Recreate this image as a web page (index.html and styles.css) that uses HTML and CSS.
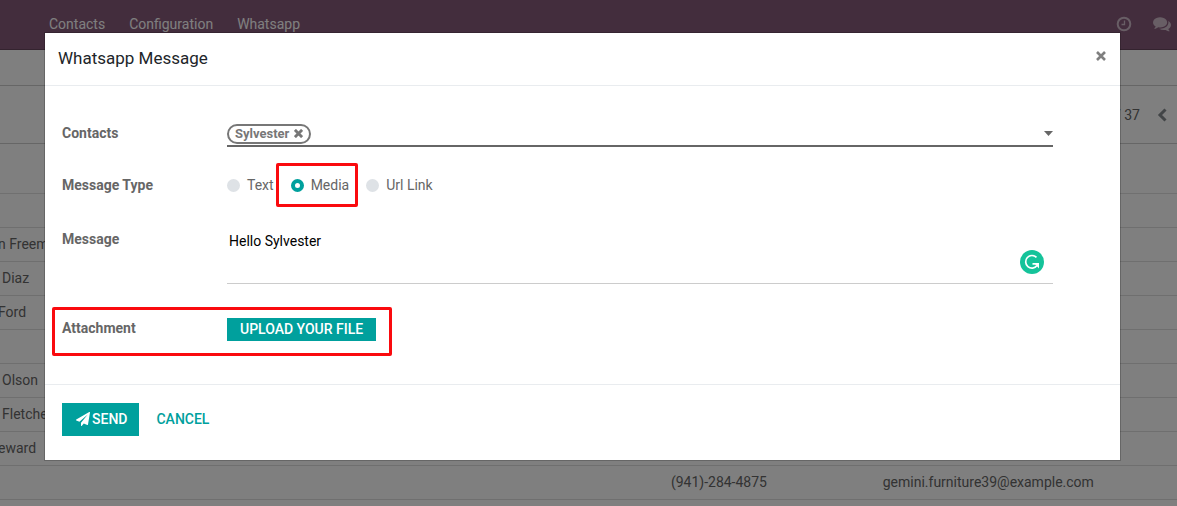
FILE: index.html
```html
<!DOCTYPE html>
<html lang="en">
<head>
<meta charset="utf-8">
<title>Whatsapp Message</title>
<link rel="stylesheet" href="styles.css">
</head>
<body>
<div class="app">
  <header class="navbar">
    <nav class="menu">
      <a href="#">Contacts</a>
      <a href="#">Configuration</a>
      <a href="#">Whatsapp</a>
    </nav>
    <div class="systray">
      <button type="button" aria-label="Activities">
        <svg width="16" height="16" viewBox="0 0 16 16" fill="none" stroke="currentColor"><circle cx="8" cy="8" r="6.3" stroke-width="2"/><path d="M8.5 4.5v4H5.5" stroke-width="1.3"/></svg>
      </button>
      <button type="button" aria-label="Messages">
        <svg width="18" height="16" viewBox="0 0 1792 1600" fill="currentColor"><path d="M1408 640q0 139-94 257t-256.500 186.500T704 1152q-86 0-176-16-124 88-278 128-36 9-86 16h-3q-11 0-20.500-8t-11.500-21q-1-3-1-6.500t.5-6.500 2-6l2.500-5 3.500-5.500 4-5 4.500-5 4-4.500q5-6 23-25t26-29.500 22.500-29 25-38.500 20.500-44Q142 974 71 865T0 640q0-139 94-257t256.500-186.500T704 128t353.500 68.500T1314 383t94 257zm384 256q0 120-71 224.500T1526 1297q10 24 20.500 44t25 38.500 22.500 29 26 29.500 23 25q1 1 4 4.500t4.500 5 4 5 3.500 5.500l2.500 5 2 6 .5 6.500-1 6.500q-3 14-13 22t-22 7q-50-7-86-16-154-40-278-128-90 16-176 16-271 0-472-132 58 4 88 4 161 0 309-45t264-129q125-92 192-212t67-254q0-77-23-152 129 71 204 178t75 230z"/></svg>
      </button>
    </div>
  </header>
  <div class="breadcrumb-bar"></div>
  <div class="pager">
    <span>/ 37</span>
    <button type="button" aria-label="Previous">
      <svg width="10" height="14" viewBox="0 0 10 14" fill="none" stroke="currentColor" stroke-width="3"><path d="M8.500 1.500L3 7l5.500 5.500"/></svg>
    </button>
  </div>
  <div class="filters"></div>
  <table class="list">
    <thead><tr><th></th><th></th><th></th></tr></thead>
    <tbody>
      <tr><td>n Freem</td><td></td><td></td></tr>
      <tr><td class="inset">Diaz</td><td></td><td></td></tr>
      <tr><td>Ford</td><td></td><td></td></tr>
      <tr><td></td><td></td><td></td></tr>
      <tr><td class="inset">Olson</td><td></td><td></td></tr>
      <tr><td class="inset">Fletche</td><td></td><td></td></tr>
      <tr><td>eward</td><td></td><td></td></tr>
      <tr><td></td><td>(941)-284-4875</td><td>gemini.furniture39@example.com</td></tr>
    </tbody>
  </table>
</div>

<div class="backdrop">
  <form class="modal" role="dialog" aria-labelledby="dialog-title">
    <header class="modal-header">
      <h1 id="dialog-title">Whatsapp Message</h1>
      <button type="button" class="close" aria-label="Close">
        <svg width="10" height="10" viewBox="0 0 10 10" stroke="currentColor" stroke-width="2.600"><path d="M1 1l8 8M9 1L1 9"/></svg>
      </button>
    </header>
    <div class="modal-body">
      <div class="field">
        <label for="contacts">Contacts</label>
        <div class="tags">
          <span class="tag">Sylvester
            <button type="button" aria-label="Remove Sylvester"><svg width="9" height="9" viewBox="0 0 10 10" stroke="currentColor" stroke-width="3.200"><path d="M1 1l8 8M9 1L1 9"/></svg></button>
          </span>
          <input id="contacts" type="text">
          <svg class="caret" width="9" height="5" viewBox="0 0 9 5" fill="currentColor"><path d="M0 0h9L4.500 5z"/></svg>
        </div>
      </div>
      <div class="field field-type">
        <span class="label" id="type-label">Message Type</span>
        <div class="radios" role="radiogroup" aria-labelledby="type-label">
          <label><input type="radio" name="type">Text</label>
          <label class="marked"><input type="radio" name="type" checked>Media</label>
          <label><input type="radio" name="type">Url Link</label>
        </div>
      </div>
      <div class="field field-message">
        <label for="message">Message</label>
        <div class="message">
          <textarea id="message" rows="2">Hello Sylvester</textarea>
          <svg class="checker" width="24" height="24" viewBox="0 0 24 24"><circle cx="12" cy="12" r="12" fill="#15c39a"/><path d="M16.500 7.400A6.300 6.300 0 1 0 17 15.600M12.500 13.800h5" fill="none" stroke="#fff" stroke-width="1.700"/><path d="M14 13h5v5.500z" fill="#fff"/></svg>
        </div>
      </div>
      <div class="field field-upload marked">
        <label for="upload">Attachment</label>
        <button type="button" id="upload" class="primary upload">Upload your file</button>
      </div>
    </div>
    <footer class="modal-footer">
      <button type="submit" class="primary send"><svg width="14" height="14" viewBox="0 0 1792 1792" fill="currentColor"><path d="M1764 11q33 24 27 64l-256 1536q-5 29-32 45-14 8-31 8-11 0-24-5l-453-185-242 295q-18 23-49 23-13 0-22-4-19-7-30.500-23.500T640 1728v-349l864-1059-1069 925-395-162q-37-14-40-55-2-40 32-59L1696 9q15-9 32-9 20 0 36 11z"/></svg>Send</button>
      <button type="button" class="cancel">Cancel</button>
    </footer>
  </form>
</div>
</body>
</html>
```
FILE: styles.css
```css
*, *::after { box-sizing: border-box; }
body {
  margin: 0;
  height: 100vh;
  overflow: hidden;
  font: 14px/20px Roboto, sans-serif;
  color: #666;
  background: #fff;
}
button {
  font: inherit;
  color: inherit;
  border: 0;
  padding: 0;
  background: none;
}
svg { display: block; }

.navbar {
  display: flex;
  justify-content: space-between;
  align-items: center;
  height: 50px;
  padding: 0 6px 2px 49px;
  color: #fff;
  background: #875a7b;
  border-bottom: 1px solid #68465f;
}
.menu { display: flex; gap: 24px; }
.menu a { color: inherit; text-decoration: none; }
.systray { display: flex; gap: 21px; color: #d0bccb; }
.breadcrumb-bar { height: 36px; border-bottom: 1px solid #ccc; }
.pager {
  display: flex;
  justify-content: flex-end;
  align-items: center;
  gap: 17px;
  height: 58px;
  padding-right: 10px;
  border-bottom: 1px solid #ccc;
}
.pager button { color: #848a8e; }
.filters { height: 50px; border-bottom: 1px solid #e0e0e0; }
.list {
  width: 100%;
  table-layout: fixed;
  border-collapse: collapse;
}
.list th, .list td {
  height: 34px;
  padding: 0;
  border-bottom: 1px solid #dedede;
  white-space: nowrap;
}
.list th { height: 33px; }
.list th:first-child { width: 57%; }
.list th:nth-child(2) { width: 18%; }
.list td:first-child { text-indent: -2px; }
.list .inset { padding-left: 4px; }

.backdrop {
  position: fixed;
  inset: 0;
  padding: 32px 56px 0 44px;
  background: rgba(0, 0, 0, 0.5);
}
.modal {
  background: #fff;
  background-clip: padding-box;
  border: 1px solid rgba(0, 0, 0, 0.2);
}
.modal-header {
  display: flex;
  justify-content: space-between;
  align-items: center;
  height: 53px;
  padding: 0 14px 3px 13px;
  border-bottom: 1px solid #e9ecef;
}
h1 {
  margin: 0;
  font-size: 17px;
  font-weight: 400;
  color: #212529;
}
.close { color: #7f7f7f; padding-bottom: 3px; }
.modal-body { padding: 36px 67px 43px 17px; }
.field {
  position: relative;
  display: grid;
  grid-template-columns: 165px 1fr;
}
.field > label, .label { font-weight: 700; }
.field:first-child > label { padding-top: 1px; }
.tags {
  display: flex;
  align-items: center;
  height: 25px;
  border-bottom: 2px solid #666;
}
.tag {
  display: flex;
  align-items: center;
  gap: 5px;
  height: 20px;
  padding: 0 6px;
  font-size: 13px;
  font-weight: 700;
  color: #777;
  border: 2px solid #777;
  border-radius: 10px;
}
.tags input {
  flex: 1;
  min-width: 0;
  border: 0;
  outline: 0;
  background: none;
}
.field-type { margin-top: 28px; }
.radios { display: flex; gap: 17px; }
.radios label {
  position: relative;
  display: flex;
  align-items: center;
  gap: 7px;
}
.radios input {
  appearance: none;
  width: 13px;
  height: 13px;
  margin: 0;
  border-radius: 50%;
  background: #dee2e6;
}
.radios input:checked {
  background: #fff;
  border: 4px solid #00a09d;
}
.marked::after {
  content: "";
  position: absolute;
  border: 3px solid #fa0a0e;
  border-radius: 2px;
  pointer-events: none;
}
.radios .marked::after { inset: -12px -9px -12px -15px; }
.field-message { margin-top: 34px; }
.message {
  position: relative;
  height: 55px;
  border-bottom: 1px solid #ccc;
}
.message textarea {
  display: block;
  width: 100%;
  height: 54px;
  padding: 2px;
  border: 0;
  outline: 0;
  resize: none;
  font: inherit;
  color: #000;
  background: none;
}
.checker { position: absolute; right: 9px; bottom: 9px; }
.field-upload { margin-top: 34px; }
.field-upload.marked::after {
  top: -11px;
  bottom: -15px;
  left: -10px;
  width: 340px;
}
.primary, .cancel {
  font-weight: 500;
  text-transform: uppercase;
}
.primary { color: #fff; background: #00a09d; }
.upload { justify-self: start; height: 23px; padding: 0 13px 2px; }
.modal-footer {
  display: flex;
  align-items: center;
  gap: 17px;
  padding: 18px 17px 24px;
  border-top: 1px solid #e9ecef;
}
.send {
  display: flex;
  align-items: center;
  gap: 2px;
  height: 33px;
  padding: 0 12px 2px 14px;
}
.cancel { color: #00a09d; padding-bottom: 2px; }
```
